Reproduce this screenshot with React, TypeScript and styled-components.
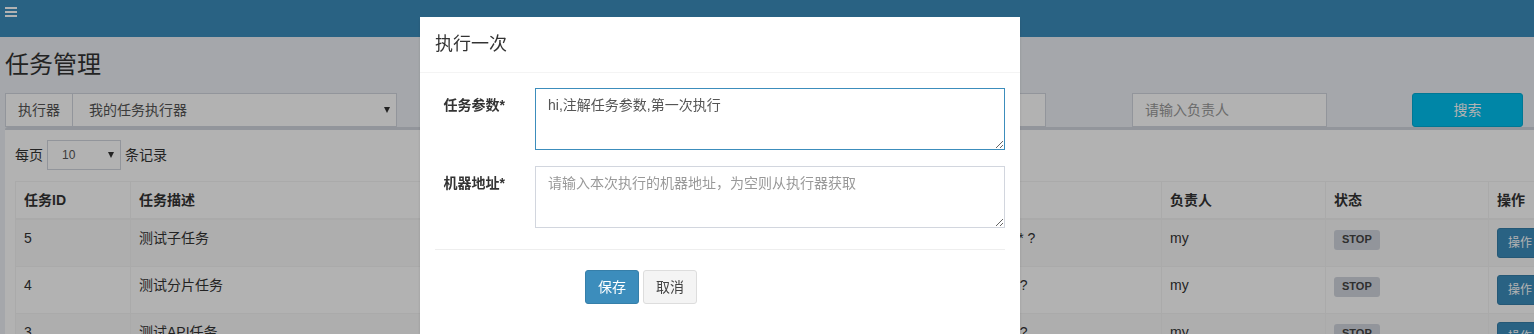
import React from "react";
import styled, { createGlobalStyle } from "styled-components";

const GlobalStyle = createGlobalStyle`
  * { box-sizing: border-box; }
  html, body { margin: 0; padding: 0; }
  body {
    background: #ecf0f5;
    font-family: "Liberation Sans", "Noto Sans CJK SC", sans-serif;
    font-size: 14px;
    line-height: 20px;
    color: #333;
    overflow: hidden;
  }
`;

const Page = styled.div`
  position: relative;
  width: 1534px;
  height: 334px;
  overflow: hidden;
  background: #ecf0f5;
`;

const TopBar = styled.header`
  height: 37px;
  background: #3c8dbc;
  padding: 7px 5px 0;
  svg {
    display: block;
  }
`;

const PageTitle = styled.h1`
  margin: 0;
  padding: 15px 5px;
  font-size: 24px;
  line-height: 26px;
  font-weight: 400;
  color: #333;
`;

const FilterRow = styled.div`
  display: flex;
  height: 34px;
  padding-left: 5px;
`;

const InputGroup = styled.div`
  display: flex;
  width: 392px;
  height: 34px;
`;

const Addon = styled.span`
  padding: 0 12px;
  line-height: 32px;
  border: 1px solid #d2d6de;
  background: #fff;
  color: #555;
`;

const FakeSelect = styled.div<{ $small?: boolean }>`
  display: flex;
  align-items: center;
  justify-content: space-between;
  flex: 1;
  border: 1px solid #d2d6de;
  background: #fff;
  color: #555;
  padding: ${(p) => (p.$small ? "0 6px 0 14px" : "0 6px 0 16px")};
  font-size: ${(p) => (p.$small ? "12px" : "14px")};
`;

const InlineSelect = styled(FakeSelect)`
  flex: none;
  width: 74px;
  height: 30px;
  margin: 0 4px;
`;

const GroupSelect = styled(FakeSelect)`
  border-left: none;
`;

const Arrow = styled.span`
  width: 0;
  height: 0;
  border-left: 3px solid transparent;
  border-right: 3px solid transparent;
  border-top: 6px solid #333;
`;

const TextInput = styled.input<{ $left: number; $width: number }>`
  margin-left: ${(p) => p.$left}px;
  width: ${(p) => p.$width}px;
  height: 34px;
  border: 1px solid #d2d6de;
  background: #fff;
  padding: 0 12px;
  font: inherit;
  color: #555;
  outline: none;
  &::placeholder {
    color: #999;
  }
`;

const SearchButton = styled.button<{ $left: number }>`
  margin-left: ${(p) => p.$left}px;
  width: 111px;
  height: 34px;
  border: 1px solid #00acd6;
  border-radius: 3px;
  background: #00c0ef;
  color: #fff;
  font: inherit;
`;

const Box = styled.section`
  margin-left: 5px;
  width: 1700px;
  border-top: 3px solid #d2d6de;
  border-radius: 3px;
  background: #fff;
  padding: 10px;
`;

const LengthRow = styled.div`
  display: flex;
  align-items: center;
  height: 30px;
  color: #333;
`;

const DataTable = styled.table`
  margin-top: 11px;
  border-collapse: collapse;
  table-layout: fixed;
  width: 1635px;
  border: 1px solid #f4f4f4;
`;

const Col = styled.col<{ $w: number }>`
  width: ${(p) => p.$w}px;
`;

const Th = styled.th`
  padding: 8px;
  border: 1px solid #f4f4f4;
  border-bottom-width: 2px;
  text-align: left;
  font-weight: 700;
  line-height: 20px;
  vertical-align: bottom;
  white-space: nowrap;
  overflow: hidden;
`;

const Tr = styled.tr`
  &:nth-child(odd) {
    background: #f9f9f9;
  }
`;

const Td = styled.td`
  padding: 8px;
  border: 1px solid #f4f4f4;
  line-height: 20px;
  vertical-align: top;
  white-space: nowrap;
  overflow: hidden;
`;

const StatusLabel = styled.span`
  display: inline-block;
  vertical-align: top;
  margin-top: 2px;
  padding: 2px 8px 4px;
  border-radius: 3px;
  background: #d2d6de;
  color: #444;
  font-size: 11px;
  font-weight: 700;
  line-height: 14px;
`;

const OpButton = styled.span`
  display: inline-flex;
  align-items: center;
  gap: 6px;
  vertical-align: top;
  height: 30px;
  padding: 0 10px;
  border: 1px solid #367fa9;
  border-radius: 3px;
  background: #3c8dbc;
  color: #fff;
  font-size: 12px;
`;

const Caret = styled.span`
  width: 0;
  height: 0;
  border-left: 4px solid transparent;
  border-right: 4px solid transparent;
  border-top: 4px solid #fff;
`;

const Backdrop = styled.div`
  position: fixed;
  inset: 0;
  background: rgba(0, 0, 0, 0.3);
`;

const Modal = styled.div`
  margin: 17px 0 0 420px;
  width: 600px;
  background: #fff;
  box-shadow: 0 2px 3px rgba(0, 0, 0, 0.125);
`;

const ModalHeader = styled.div`
  padding: 15px;
  border-bottom: 1px solid #f4f4f4;
`;

const ModalTitle = styled.h4`
  margin: 0;
  font-size: 18px;
  line-height: 25px;
  font-weight: 400;
  color: #333;
`;

const ModalBody = styled.div`
  padding: 15px;
`;

const Form = styled.form`
  display: flex;
  flex-direction: column;
  gap: 16px;
`;

const FormRow = styled.div`
  display: flex;
`;

const FieldLabel = styled.label`
  width: 70px;
  padding-top: 7px;
  text-align: right;
  font-weight: 700;
  white-space: nowrap;
  color: #333;
`;

const TextArea = styled.textarea<{ $focused?: boolean }>`
  margin-left: 30px;
  width: 470px;
  height: 62px;
  padding: 6px 12px;
  border: 1px solid ${(p) => (p.$focused ? "#3c8dbc" : "#d2d6de")};
  border-radius: 0;
  font-family: inherit;
  font-size: 14px;
  line-height: 20px;
  color: #555;
  outline: none;
  &::placeholder {
    color: #999;
  }
`;

const Divider = styled.div`
  margin: 21px 0 20px;
  border-top: 1px solid #eee;
`;

const ButtonRow = styled.div`
  display: flex;
  gap: 4px;
  padding-left: 150px;
  margin-bottom: 15px;
`;

const Button = styled.button<{ $variant: "primary" | "default" }>`
  height: 34px;
  padding: 0 12px;
  border: 1px solid ${(p) => (p.$variant === "primary" ? "#367fa9" : "#ddd")};
  border-radius: 3px;
  background: ${(p) => (p.$variant === "primary" ? "#3c8dbc" : "#f4f4f4")};
  color: ${(p) => (p.$variant === "primary" ? "#fff" : "#444")};
  font-family: inherit;
  font-size: 14px;
  line-height: 20px;
`;

const jobs = [
  { id: 5, desc: "测试子任务", mode: "BEAN：demoJobHandler", cron: "0 0 10 * * ?", author: "my" },
  { id: 4, desc: "测试分片任务", mode: "BEAN：shardingJobHandler", cron: "0 0 0 * * ?", author: "my" },
  { id: 3, desc: "测试API任务", mode: "BEAN：httpJobHandler", cron: "0 0 0 * * ?", author: "my" },
];

const colWidths = [115, 430, 397, 204, 164, 163, 162];

export default function App() {
  return (
    <Page>
      <GlobalStyle />
      <TopBar>
        <svg width="12" height="10" viewBox="0 0 12 10">
          <rect x="0" y="0" width="12" height="2" fill="#fff" />
          <rect x="0" y="4" width="12" height="2" fill="#fff" />
          <rect x="0" y="8" width="12" height="2" fill="#fff" />
        </svg>
      </TopBar>
      <PageTitle>任务管理</PageTitle>
      <FilterRow>
        <InputGroup>
          <Addon>执行器</Addon>
          <GroupSelect>
            我的任务执行器
            <Arrow />
          </GroupSelect>
        </InputGroup>
        <TextInput $left={30} $width={392} placeholder="请输入任务描述" />
        <TextInput $left={31} $width={196} placeholder="JobHandler" />
        <TextInput $left={86} $width={195} placeholder="请输入负责人" />
        <SearchButton $left={85}>搜索</SearchButton>
      </FilterRow>
      <Box>
        <LengthRow>
          每页
          <InlineSelect $small>
            10
            <Arrow />
          </InlineSelect>
          条记录
        </LengthRow>
        <DataTable>
          <colgroup>
            {colWidths.map((w, i) => (
              <Col key={i} $w={w} />
            ))}
          </colgroup>
          <thead>
            <tr>
              <Th>任务ID</Th>
              <Th>任务描述</Th>
              <Th>运行模式</Th>
              <Th>Cron</Th>
              <Th>负责人</Th>
              <Th>状态</Th>
              <Th>操作</Th>
            </tr>
          </thead>
          <tbody>
            {jobs.map((job) => (
              <Tr key={job.id}>
                <Td>{job.id}</Td>
                <Td>{job.desc}</Td>
                <Td>{job.mode}</Td>
                <Td>{job.cron}</Td>
                <Td>{job.author}</Td>
                <Td>
                  <StatusLabel>STOP</StatusLabel>
                </Td>
                <Td>
                  <OpButton>
                    操作
                    <Caret />
                  </OpButton>
                </Td>
              </Tr>
            ))}
          </tbody>
        </DataTable>
      </Box>
      <Backdrop>
        <Modal>
          <ModalHeader>
            <ModalTitle>执行一次</ModalTitle>
          </ModalHeader>
          <ModalBody>
            <Form>
              <FormRow>
                <FieldLabel>任务参数*</FieldLabel>
                <TextArea $focused defaultValue="hi,注解任务参数,第一次执行" />
              </FormRow>
              <FormRow>
                <FieldLabel>机器地址*</FieldLabel>
                <TextArea placeholder="请输入本次执行的机器地址，为空则从执行器获取" />
              </FormRow>
            </Form>
            <Divider />
            <ButtonRow>
              <Button $variant="primary">保存</Button>
              <Button $variant="default">取消</Button>
            </ButtonRow>
          </ModalBody>
        </Modal>
      </Backdrop>
    </Page>
  );
}
